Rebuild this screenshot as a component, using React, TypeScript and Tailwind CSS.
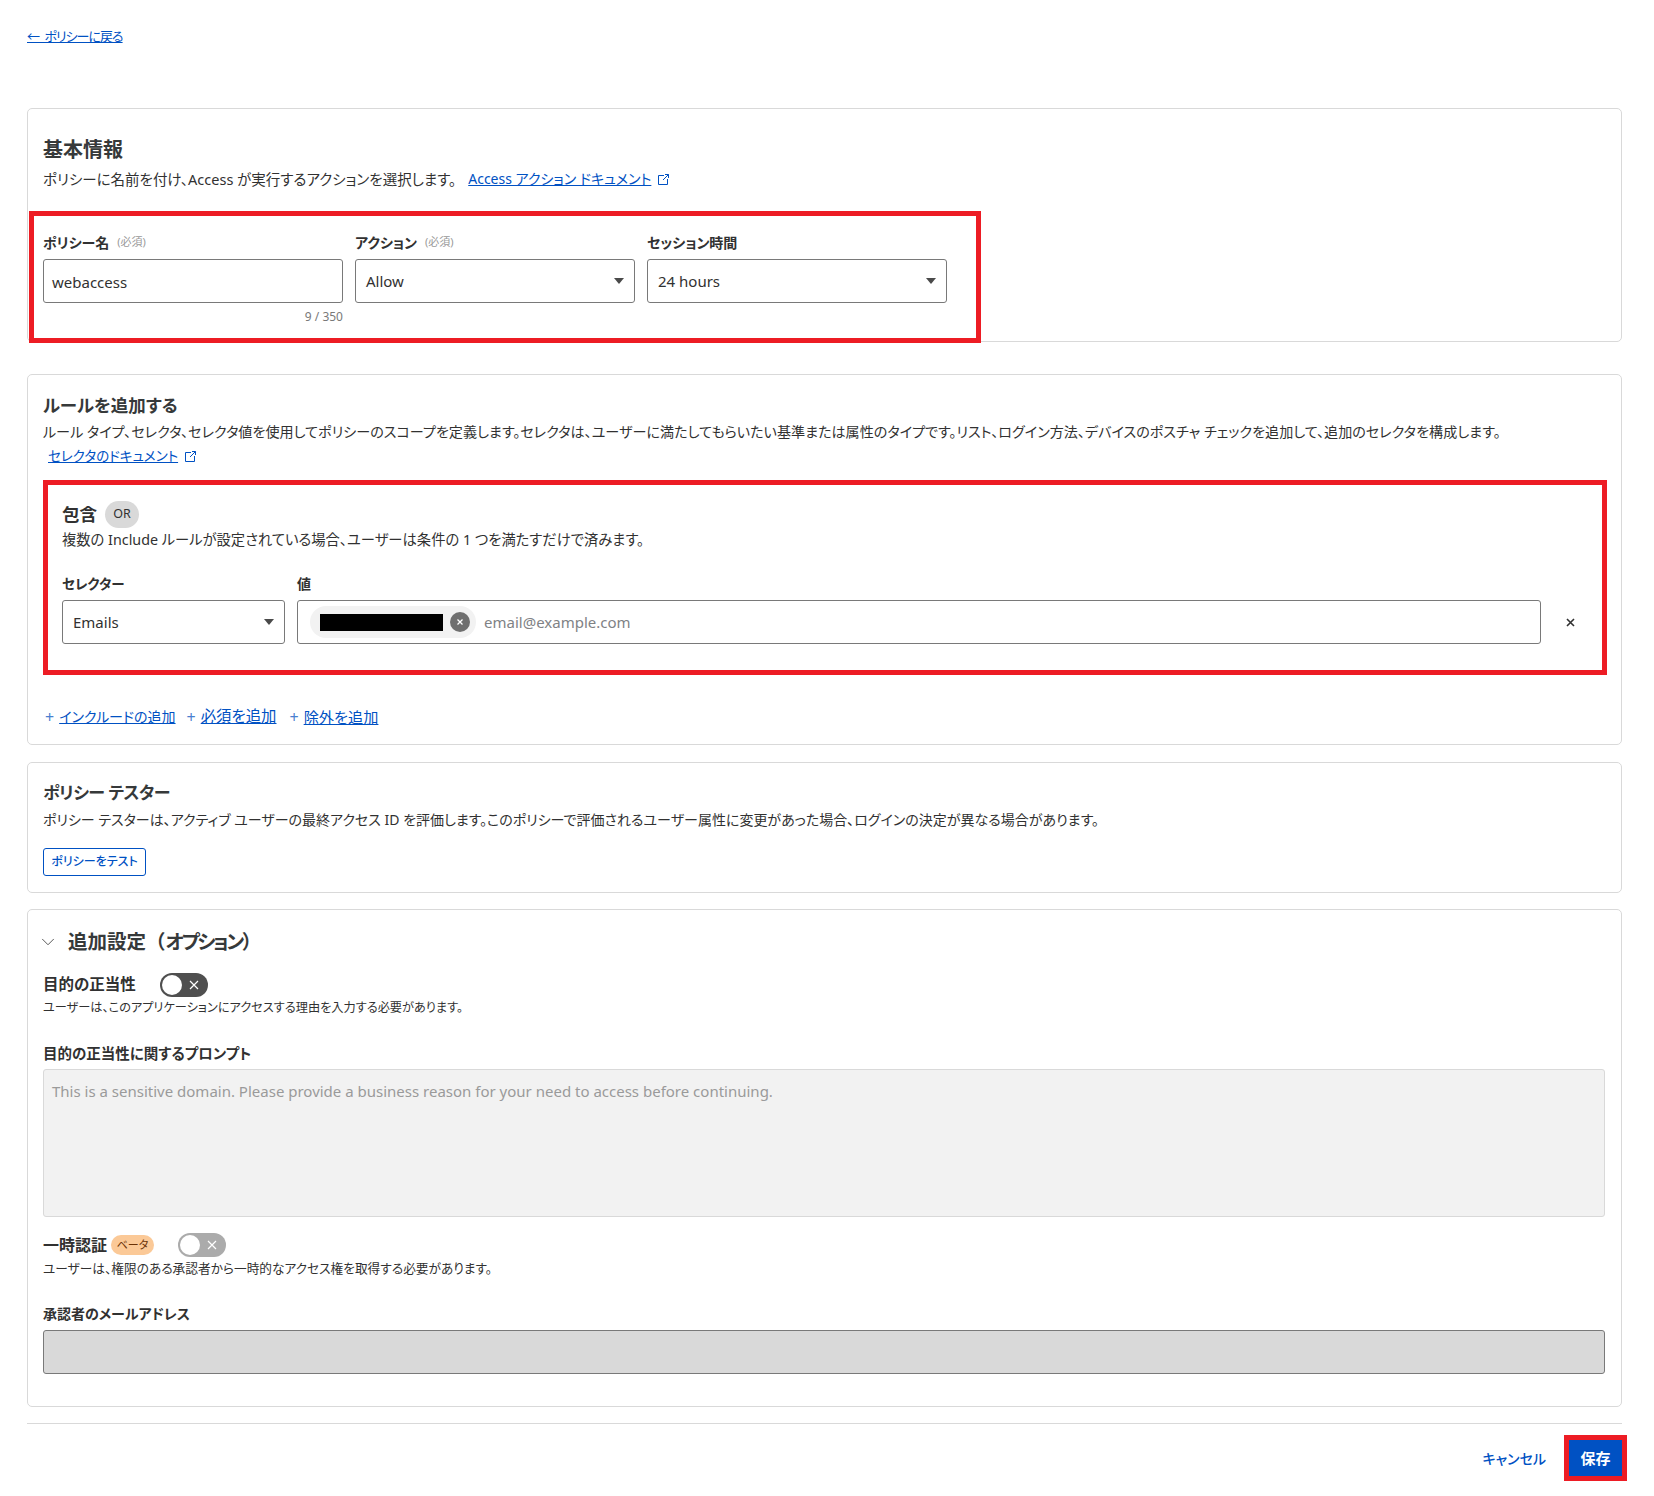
import React from "react";
import { ChevronDown } from "lucide-react";

function Ext() {
  return (
    <svg width="13" height="13" viewBox="0 0 13 13" fill="none" stroke="#0051c3" strokeWidth="1" className="inline-block">
      <path d="M7 2.5H1.5V11.5H10.5V6" />
      <path d="M6 7L11.5 1.5M8 1.5H11.5V5" />
    </svg>
  );
}

function Caret() {
  return (
    <svg width="10" height="6" viewBox="0 0 10 6" className="absolute right-[10px] top-[18px]">
      <path d="M0 0H10L5 6Z" fill="#4a4a4a" />
    </svg>
  );
}

function Select({ value, className }: { value: string; className: string }) {
  return (
    <div className={"relative h-[44px] rounded-[3px] border border-[#797979] flex items-center pl-[10px] text-[15px] text-[#313131] " + className}>
      {value}
      <Caret />
    </div>
  );
}

function Toggle({ muted }: { muted?: boolean }) {
  return (
    <span className={"flex items-center justify-between w-[48px] h-[24px] rounded-full pl-[2px] pr-[9px] " + (muted ? "bg-[#ababab]" : "bg-[#4f4f4f]")}>
      <span className="w-[20px] h-[20px] rounded-full bg-white" />
      <svg width="10" height="10" viewBox="0 0 10 10" stroke="white" strokeWidth="1.2">
        <path d="M1 1L9 9M9 1L1 9" />
      </svg>
    </span>
  );
}

function AddLink({ text, className }: { text: string; className: string }) {
  return (
    <span className="flex items-center gap-[5px]">
      <span className="text-[#4a7fd0] text-[16px] leading-[20px]">+</span>
      <a className={"text-[#0051c3] underline h-[20px] leading-[20px] " + className}>{text}</a>
    </span>
  );
}

const cardClass = "rounded-[5px] border border-[#d9d9d9] pl-[15px] pr-[16px]";

export default function App() {
  return (
    <div className="w-[1654px] pl-[27px] pr-[32px] pt-[26px] pb-[15px] bg-white text-[#313131] font-['Noto_Sans','Noto_Sans_CJK_JP',sans-serif] [font-feature-settings:'palt']">
      <a className="block text-[13px] tracking-[-1px] [word-spacing:3px] leading-[20px] text-[#0051c3] underline">← ポリシーに戻る</a>

      <section className={cardClass + " mt-[62px] pt-[27px]"}>
        <h2 className="text-[20px] leading-[28px] font-bold text-[#36393a]">基本情報</h2>
        <p className="mt-[5px] text-[14.5px] leading-[20px] flex items-center">
          ポリシーに名前を付け、Access が実行するアクションを選択します。
          <a className="ml-[12px] text-[14px] text-[#0051c3] underline">Access アクション ドキュメント</a>
          <span className="ml-[6px] flex"><Ext /></span>
        </p>
        <div className="mt-[22px] -ml-[14px] -mb-[2px] w-[952px] border-[5px] border-[#ed1c24] pl-[9px] pt-[16px] pb-[13px]">
          <div className="grid grid-cols-[300px_280px_300px] gap-x-[12px]">
            <div>
              <div className="h-[20px] flex items-center text-[14px] font-bold">ポリシー名<span className="ml-[8px] text-[11px] font-normal text-[#9a9a9a]">(必須)</span></div>
              <div className="mt-[7px] h-[44px] rounded-[3px] border border-[#797979] flex items-center pl-[8px] pt-[2px] text-[15px]">webaccess</div>
              <div className="mt-[6px] text-right text-[12px] leading-[16px] text-[#797979]">9 / 350</div>
            </div>
            <div>
              <div className="h-[20px] flex items-center text-[14px] font-bold">アクション<span className="ml-[8px] text-[11px] font-normal text-[#9a9a9a]">(必須)</span></div>
              <Select value="Allow" className="mt-[7px]" />
            </div>
            <div>
              <div className="h-[20px] flex items-center text-[14px] font-bold">セッション時間</div>
              <Select value="24 hours" className="mt-[7px]" />
            </div>
          </div>
        </div>
      </section>

      <section className={cardClass + " mt-[32px] pt-[17px] pb-[17px]"}>
        <h2 className="text-[17.5px] leading-[26px] font-bold text-[#36393a]">ルールを追加する</h2>
        <p className="mt-[4px] text-[14.1px] leading-[20px] whitespace-nowrap">ルール タイプ、セレクタ、セレクタ値を使用してポリシーのスコープを定義します。セレクタは、ユーザーに満たしてもらいたい基準または属性のタイプです。リスト、ログイン方法、デバイスのポスチャ チェックを追加して、追加のセレクタを構成します。</p>
        <p className="mt-[4px] pl-[5px] text-[13.5px] leading-[20px] flex items-center gap-[6px]">
          <a className="text-[#0051c3] underline">セレクタのドキュメント</a>
          <Ext />
        </p>
        <div className="mt-[14px] -mr-[2px] border-[5px] border-[#ed1c24] pl-[14px] pt-[16px] pb-[26px]">
          <div className="flex items-center gap-[8px]">
            <span className="text-[17.5px] leading-[27px] font-bold">包含</span>
            <span className="w-[34px] h-[27px] rounded-full bg-[#d9d9d9] text-[12.5px] flex items-center justify-center">OR</span>
          </div>
          <p className="mt-[2px] text-[14.3px] leading-[20px]">複数の Include ルールが設定されている場合、ユーザーは条件の 1 つを満たすだけで済みます。</p>
          <div className="mt-[24px] flex gap-[12px] items-end">
            <div className="w-[223px]">
              <div className="text-[13.5px] leading-[20px] font-bold">セレクター</div>
              <Select value="Emails" className="mt-[6px]" />
            </div>
            <div className="w-[1244px]">
              <div className="text-[14px] leading-[20px] font-bold">値</div>
              <div className="mt-[6px] h-[44px] rounded-[3px] border border-[#797979] flex items-center pl-[12px] text-[15px]">
                <span className="h-[32px] w-[166px] rounded-full bg-[#f2f2f2] flex items-center pl-[10px]">
                  <span className="w-[123px] h-[17px] bg-black" />
                  <span className="ml-[7px] w-[20px] h-[20px] rounded-full bg-[#6f6f6f] flex items-center justify-center">
                    <svg width="8" height="8" viewBox="0 0 8 8" stroke="white" strokeWidth="1.3"><path d="M1.5 1.5L6.5 6.5M6.5 1.5L1.5 6.5" /></svg>
                  </span>
                </span>
                <span className="ml-[8px] text-[#808285]">email@example.com</span>
              </div>
            </div>
            <span className="h-[44px] ml-[13px] flex items-center">
              <svg width="9" height="9" viewBox="0 0 9 9" stroke="#313131" strokeWidth="1.6"><path d="M1 1L8 8M8 1L1 8" /></svg>
            </span>
          </div>
        </div>
        <div className="mt-[32px] flex pl-[2px] gap-[11px]">
          <AddLink text="インクルードの追加" className="text-[14px]" />
          <AddLink text="必須を追加" className="text-[15.4px]" />
          <span className="ml-[2px]"><AddLink text="除外を追加" className="text-[15.2px]" /></span>
        </div>
      </section>

      <section className={cardClass + " mt-[17px] pt-[17px] pb-[16px]"}>
        <h2 className="text-[17px] tracking-[-0.5px] leading-[26px] font-bold text-[#36393a]">ポリシー テスター</h2>
        <p className="mt-[4px] text-[14px] leading-[20px]">ポリシー テスターは、アクティブ ユーザーの最終アクセス ID を評価します。このポリシーで評価されるユーザー属性に変更があった場合、ログインの決定が異なる場合があります。</p>
        <button className="mt-[18px] h-[28px] w-[103px] rounded-[3px] border border-[#0051c3] text-[#0051c3] text-[12px] font-medium flex items-center justify-center">ポリシーをテスト</button>
      </section>

      <section className={cardClass + " mt-[16px] pt-[18px] pb-[32px]"}>
        <h2 className="flex items-center text-[19.5px] leading-[28px] font-bold text-[#36393a]">
          <ChevronDown size={22} strokeWidth={1} className="-ml-[6px] mr-[9px] text-[#4a4a4a]" />
          <span>追加設定</span>
          <span className="[font-feature-settings:normal]">（</span>
          <span className="tracking-[-2.4px]">オプション</span>
          <span className="[font-feature-settings:normal]">）</span>
        </h2>
        <div className="mt-[17px] flex items-center gap-[24px]">
          <span className="text-[15.5px] font-bold">目的の正当性</span>
          <Toggle />
        </div>
        <p className="mt-[3px] text-[12.2px] leading-[16px]">ユーザーは、このアプリケーションにアクセスする理由を入力する必要があります。</p>
        <div className="mt-[27px] text-[14.5px] leading-[20px] font-bold">目的の正当性に関するプロンプト</div>
        <div className="mt-[6px] h-[148px] rounded-[3px] border border-[#d9d9d9] bg-[#f2f2f2] pl-[8px] pt-[11px] text-[15px] leading-[20px] text-[#9a9a9a]">This is a sensitive domain. Please provide a business reason for your need to access before continuing.</div>
        <div className="mt-[16px] flex items-center">
          <span className="text-[16px] font-bold">一時認証</span>
          <span className="ml-[4px] w-[43px] h-[20px] rounded-full bg-[#fbc997] text-[11px] text-[#6a3206] flex items-center justify-center">ベータ</span>
          <span className="ml-[24px]"><Toggle muted /></span>
        </div>
        <p className="mt-[3px] text-[12.7px] leading-[16px]">ユーザーは、権限のある承認者から一時的なアクセス権を取得する必要があります。</p>
        <div className="mt-[28px] text-[14px] leading-[20px] font-bold">承認者のメールアドレス</div>
        <div className="mt-[6px] h-[44px] rounded-[3px] border border-[#797979] bg-[#d9d9d9]" />
      </section>

      <div className="mt-[16px] border-t border-[#d9d9d9] pt-[11px] flex justify-end items-center">
        <a className="mr-[18px] text-[14px] font-medium text-[#0051c3]">キャンセル</a>
        <div className="-mr-[5px] border-[5px] border-[#ed1c24]">
          <button className="w-[53px] h-[36px] bg-[#0051c3] text-white text-[15px] font-bold">保存</button>
        </div>
      </div>
    </div>
  );
}
